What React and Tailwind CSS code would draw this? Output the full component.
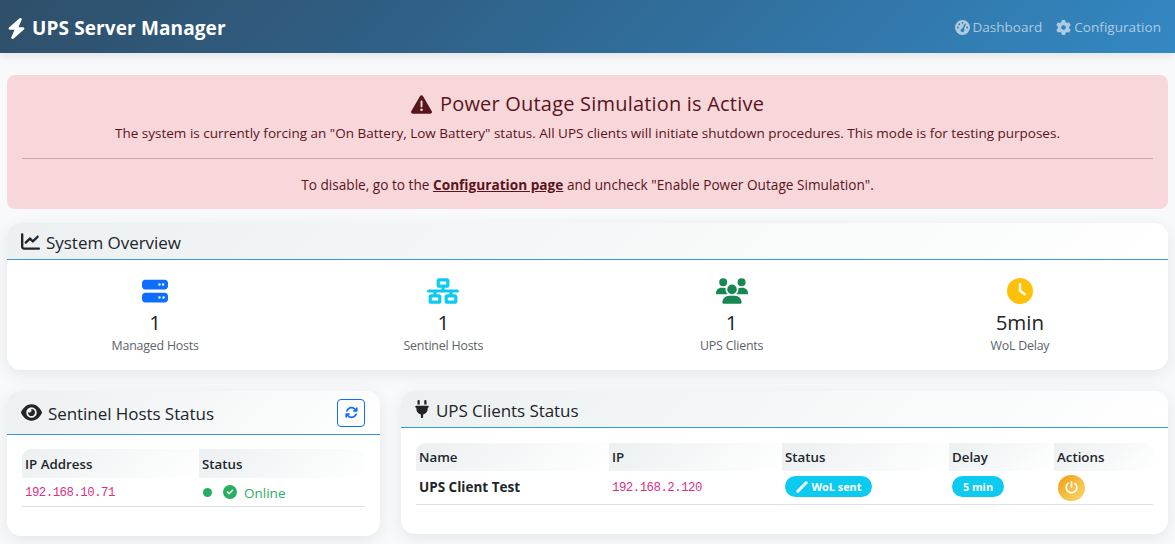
import React from "react";
import {
  FaBolt, FaGaugeHigh, FaGear, FaTriangleExclamation, FaChartLine, FaServer, FaNetworkWired,
  FaUsers, FaClock, FaEye, FaArrowsRotate, FaPlug, FaCircleCheck, FaPowerOff,
} from "react-icons/fa6";

const HEAD = "bg-[linear-gradient(135deg,#ecf0f1,#ffffff)]";

function Wand({ className }) {
  return (
    <svg viewBox="0 0 12 12" className={className} fill="none" stroke="currentColor">
      <path d="M1.8 10.2 10.2 1.8" strokeWidth="3" strokeLinecap="round" />
      <path d="M7.2 3 9 4.8" stroke="#0dcaf0" strokeWidth="0.6" />
    </svg>
  );
}

function Card({ className, children }) {
  return (
    <section className={`overflow-hidden rounded-[14px] bg-white shadow-[0_4px_16px_rgba(0,0,0,0.08)] ${className}`}>
      {children}
    </section>
  );
}

function Stat({ icon: Icon, color, value, label }) {
  return (
    <div className="flex flex-1 flex-col items-center">
      <Icon className={`h-[26px] ${color}`} />
      <div className="mt-[5px] h-[27px] text-[20.5px] leading-[27px]">{value}</div>
      <div className="mt-[1px] text-[12.4px] leading-[18px] tracking-[-0.2px] text-[#5c636a]">{label}</div>
    </div>
  );
}

function Th({ children, className = "" }) {
  return (
    <div className={`flex items-center pt-[2px] pl-[3px] text-[13.3px] font-semibold ${HEAD} ${className}`}>{children}</div>
  );
}

function Ip({ children }) {
  return (
    <code className="font-['Liberation_Mono',monospace] text-[12.4px] tracking-[-0.52px] text-[#d63384]">{children}</code>
  );
}

export default function App() {
  return (
    <div className="h-[544px] overflow-hidden bg-[#f8f9fb] font-['Open_Sans',sans-serif] text-[#212529]">
      <header className="flex h-[53px] items-center justify-between bg-[linear-gradient(135deg,#2f4f69,#2f5d82_30%,#3388c3)] pr-[14px] pl-[7px] text-white shadow-[0_2px_10px_rgba(0,0,0,0.1)]">
        <div className="flex items-center pt-[3px]">
          <FaBolt className="h-[21px] w-[19px]" />
          <h1 className="ml-[6px] text-[19px] leading-[28px] font-bold tracking-[0.12px]">UPS Server Manager</h1>
        </div>
        <nav className="flex items-center pt-[2px] text-[13.5px] text-white/60">
          <FaGaugeHigh className="size-[15px]" />
          <span className="ml-[3px]">Dashboard</span>
          <FaGear className="ml-[14px] size-[15px]" />
          <span className="ml-[3px] tracking-[0.05px]">Configuration</span>
        </nav>
      </header>

      <main className="px-[7px] pt-[22px]">
        <div className="h-[134px] rounded-[8px] bg-[#f8d7da] px-[15px] pt-[15px] text-center text-[13.5px] text-[#58151c]">
          <h2 className="flex h-[28px] items-center justify-center text-[20px]">
            <FaTriangleExclamation className="mr-[8px] size-[21px]" />
            <span className="tracking-[0.2px]">Power Outage Simulation is Active</span>
          </h2>
          <p className="mt-[5px] h-[20px] leading-[20px] whitespace-nowrap">
            The system is currently forcing an "On Battery, Low Battery" status. All UPS clients will initiate shutdown procedures. This mode is for testing purposes.
          </p>
          <hr className="mt-[15px] border-[#d2a7ac]" />
          <p className="mt-[16px] h-[20px] text-[13.65px] leading-[20px] whitespace-nowrap">
            To disable, go to the <a className="font-bold underline">Configuration page</a> and uncheck "Enable Power Outage Simulation".
          </p>
        </div>

        <Card className="mt-[14px] h-[147px]">
          <div className={`flex h-[37px] items-center border-b border-[#3498db] pl-[14px] pt-px ${HEAD}`}>
            <FaChartLine className="size-[19px]" />
            <h3 className="ml-[6px] pt-[2px] text-[17px] tracking-[-0.03px]">System Overview</h3>
          </div>
          <div className="flex px-[4px] pt-[18px]">
            <Stat icon={FaServer} color="w-[26px] text-[#0d6efd]" value="1" label="Managed Hosts" />
            <Stat icon={FaNetworkWired} color="w-[32px] text-[#0dcaf0]" value="1" label="Sentinel Hosts" />
            <Stat icon={FaUsers} color="w-[32px] text-[#198754]" value="1" label="UPS Clients" />
            <Stat icon={FaClock} color="w-[26px] text-[#ffc107]" value="5min" label="WoL Delay" />
          </div>
        </Card>

        <div className="mt-[21px] flex items-start gap-[21px]">
          <Card className="h-[145px] w-[373px]">
            <div className={`flex h-[44px] items-center border-b border-[#3498db] pr-[15px] pl-[14px] ${HEAD}`}>
              <FaEye className="h-[19px] w-[21px]" />
              <h3 className="ml-[6px] flex-1 pt-[2px] text-[17px] tracking-[-0.06px]">Sentinel Hosts Status</h3>
              <button className="flex size-[28px] items-center justify-center rounded-[4px] border border-[#0d6efd] text-[#0d6efd]">
                <FaArrowsRotate className="size-[13px]" />
              </button>
            </div>
            <div className="px-[15px] pt-[14px]">
              <div className="grid h-[29px] grid-cols-[177px_1fr]">
                <Th className="rounded-tl-[9px]">IP Address</Th>
                <Th className="rounded-tr-[9px]">Status</Th>
              </div>
              <div className="grid h-[29px] grid-cols-[177px_1fr] border-b border-[#dee2e6]">
                <div className="flex items-center pt-[3px] pl-[3px]"><Ip>192.168.10.71</Ip></div>
                <div className="flex items-center pl-[4px] text-[13.5px] text-[#27ae60]">
                  <span className="mt-px size-[9px] rounded-full bg-[#27ae60]" />
                  <FaCircleCheck className="ml-[11px] size-[14px]" />
                  <span className="ml-[7px] pt-[2px]">Online</span>
                </div>
              </div>
            </div>
          </Card>

          <Card className="h-[143px] w-[767px]">
            <div className={`flex h-[37px] items-center border-b border-[#3498db] pl-[14px] ${HEAD}`}>
              <FaPlug className="h-[18px] w-[14px]" />
              <h3 className="ml-[7px] pt-[4px] text-[17px] tracking-[-0.06px]">UPS Clients Status</h3>
            </div>
            <div className="px-[15px] pt-[15px]">
              <div className="grid h-[28px] grid-cols-[193px_173px_167px_105px_1fr]">
                <Th className="rounded-tl-[9px]">Name</Th>
                <Th>IP</Th>
                <Th>Status</Th>
                <Th>Delay</Th>
                <Th className="rounded-tr-[9px]">Actions</Th>
              </div>
              <div className="grid h-[34px] grid-cols-[193px_173px_167px_105px_1fr] border-b border-[#dee2e6]">
                <div className="flex items-center pb-px pl-[3px] text-[13.5px] font-bold">UPS Client Test</div>
                <div className="flex items-center pt-px pl-[3px]"><Ip>192.168.2.120</Ip></div>
                <div className="flex items-center pb-[2px] pl-[3px]">
                  <span className="flex h-[21px] w-[87px] items-center justify-center rounded-full bg-[#0dcaf0] text-[10.9px] font-bold text-white">
                    <Wand className="mr-[4px] size-[12px]" />
                    <span className="pt-px">WoL sent</span>
                  </span>
                </div>
                <div className="flex items-center pb-[2px] pl-[3px]">
                  <span className="flex h-[21px] w-[52px] items-center justify-center rounded-full bg-[#0dcaf0] pt-px text-[10.9px] font-bold text-white">5 min</span>
                </div>
                <div className="flex items-center pl-[4px]">
                  <button className="flex h-[26px] w-[27px] items-center justify-center rounded-full bg-[linear-gradient(135deg,#f39c12,#f7dc6f)] text-white">
                    <FaPowerOff className="size-[13px]" />
                  </button>
                </div>
              </div>
            </div>
          </Card>
        </div>
      </main>
    </div>
  );
}
